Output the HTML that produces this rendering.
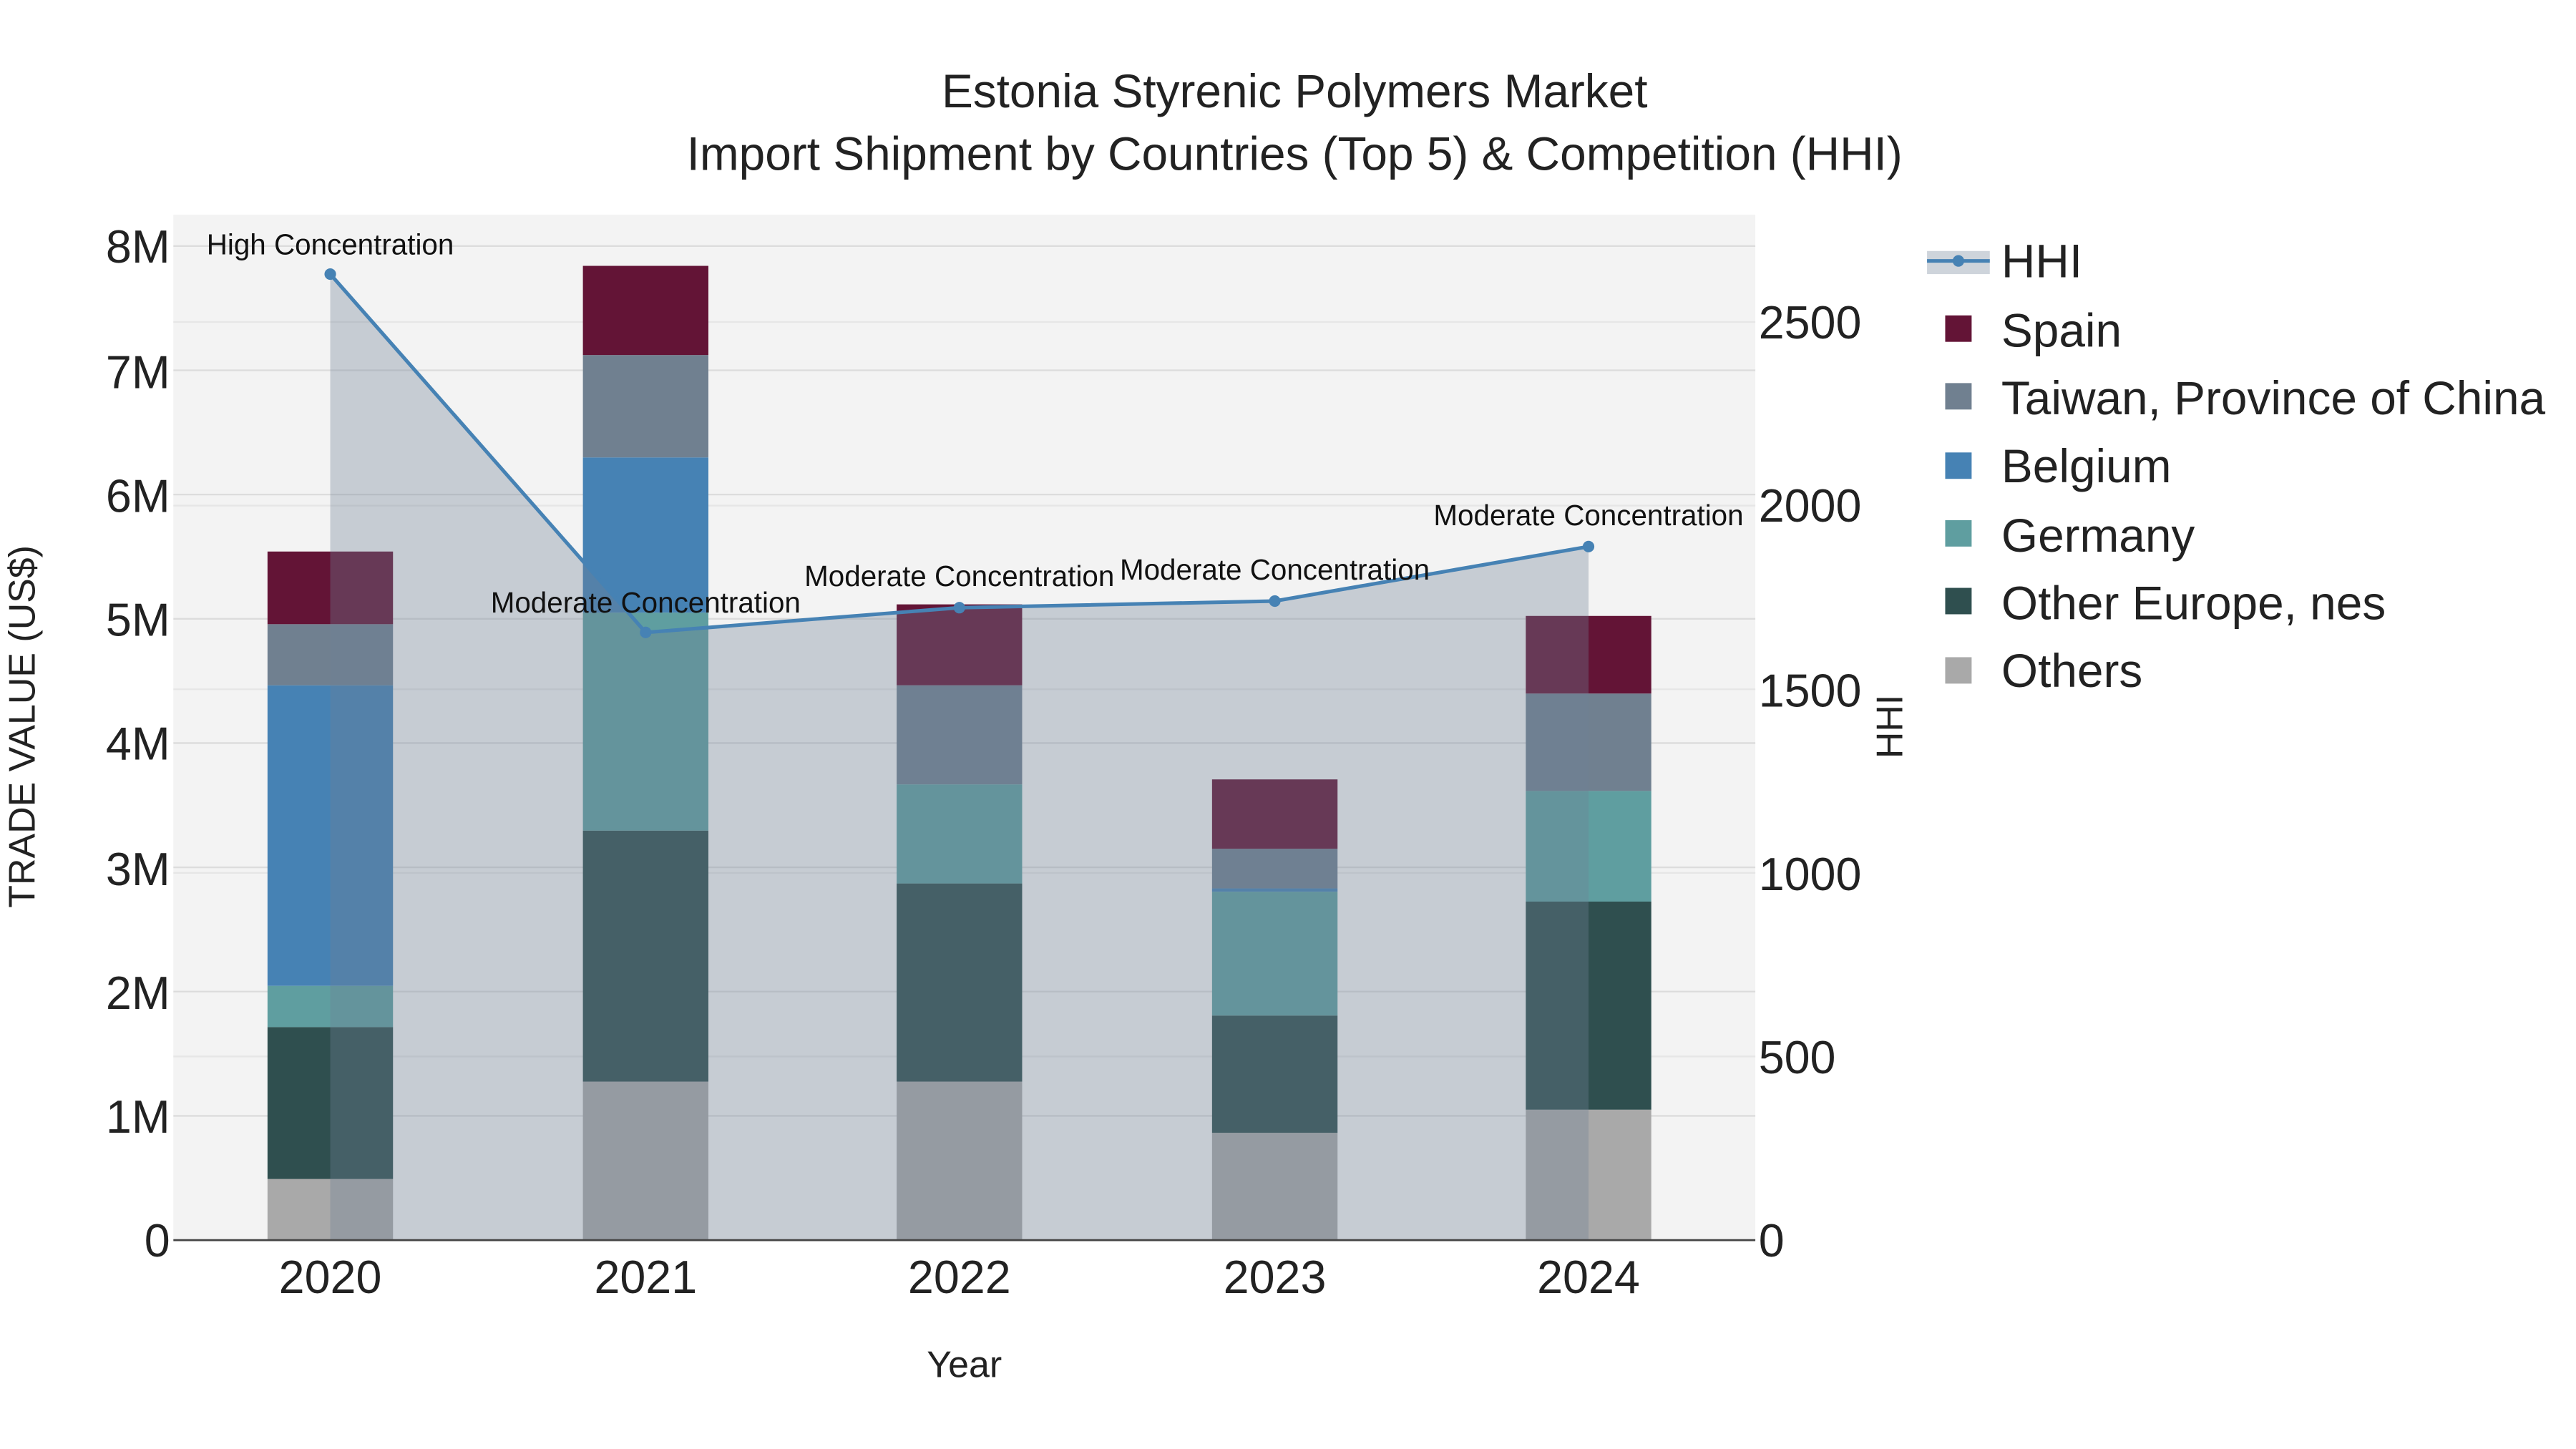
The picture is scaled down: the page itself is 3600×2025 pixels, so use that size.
<!DOCTYPE html>
<html><head><meta charset="utf-8"><style>html,body{margin:0;padding:0;background:#fff}svg{display:block}</style></head>
<body>
<svg width="3600" height="2025" viewBox="0 0 1560 877.5" xmlns="http://www.w3.org/2000/svg" font-family="Liberation Sans, sans-serif">
<rect width="1560" height="877.5" fill="#fff"/>
<rect x="105" y="130" width="958" height="621" fill="#f3f3f3"/>
<g stroke="#dcdcdc" stroke-width="1">
<line x1="105" x2="1063" y1="675.75" y2="675.75"/><line x1="105" x2="1063" y1="600.5" y2="600.5"/>
<line x1="105" x2="1063" y1="525.25" y2="525.25"/><line x1="105" x2="1063" y1="450" y2="450"/>
<line x1="105" x2="1063" y1="374.75" y2="374.75"/><line x1="105" x2="1063" y1="299.5" y2="299.5"/>
<line x1="105" x2="1063" y1="224.25" y2="224.25"/><line x1="105" x2="1063" y1="149" y2="149"/>
</g>
<g stroke="#e6e6e6" stroke-width="1">
<line x1="105" x2="1063" y1="639.8" y2="639.8"/><line x1="105" x2="1063" y1="528.6" y2="528.6"/>
<line x1="105" x2="1063" y1="417.4" y2="417.4"/><line x1="105" x2="1063" y1="306.2" y2="306.2"/>
<line x1="105" x2="1063" y1="195" y2="195"/>
</g>
<g>
<rect x="162" y="714" width="76" height="37" fill="#a9a9a9"/>
<rect x="162" y="622" width="76" height="92" fill="#2f4f4f"/>
<rect x="162" y="597" width="76" height="25" fill="#5f9ea0"/>
<rect x="162" y="415" width="76" height="182" fill="#4682b4"/>
<rect x="162" y="378" width="76" height="37" fill="#708090"/>
<rect x="162" y="334" width="76" height="44" fill="#631436"/>

<rect x="353" y="655" width="76" height="96" fill="#a9a9a9"/>
<rect x="353" y="503" width="76" height="152" fill="#2f4f4f"/>
<rect x="353" y="371" width="76" height="132" fill="#5f9ea0"/>
<rect x="353" y="277" width="76" height="94" fill="#4682b4"/>
<rect x="353" y="215" width="76" height="62" fill="#708090"/>
<rect x="353" y="161" width="76" height="54" fill="#631436"/>

<rect x="543" y="655" width="76" height="96" fill="#a9a9a9"/>
<rect x="543" y="535" width="76" height="120" fill="#2f4f4f"/>
<rect x="543" y="475" width="76" height="60" fill="#5f9ea0"/>
<rect x="543" y="415" width="76" height="60" fill="#708090"/>
<rect x="543" y="366" width="76" height="49" fill="#631436"/>

<rect x="734" y="686" width="76" height="65" fill="#a9a9a9"/>
<rect x="734" y="615" width="76" height="71" fill="#2f4f4f"/>
<rect x="734" y="540" width="76" height="75" fill="#5f9ea0"/>
<rect x="734" y="538" width="76" height="2" fill="#4682b4"/>
<rect x="734" y="514" width="76" height="24" fill="#708090"/>
<rect x="734" y="472" width="76" height="42" fill="#631436"/>

<rect x="924" y="672" width="76" height="79" fill="#a9a9a9"/>
<rect x="924" y="546" width="76" height="126" fill="#2f4f4f"/>
<rect x="924" y="479" width="76" height="67" fill="#5f9ea0"/>
<rect x="924" y="420" width="76" height="59" fill="#708090"/>
<rect x="924" y="373" width="76" height="47" fill="#631436"/>
</g>
<polygon points="200,166 391,383 581,368 772,364 962,331 962,751 200,751" fill="rgb(112,128,150)" fill-opacity="0.34"/>
<polyline points="200,166 391,383 581,368 772,364 962,331" fill="none" stroke="#4682b4" stroke-width="2.2"/>
<g fill="#4682b4"><circle cx="200" cy="166" r="3.5"/><circle cx="391" cy="383" r="3.5"/><circle cx="581" cy="368" r="3.5"/><circle cx="772" cy="364" r="3.5"/><circle cx="962" cy="331" r="3.5"/></g>
<line x1="105" x2="1063" y1="751" y2="751" stroke="#444" stroke-width="1.2"/>
<g font-size="17.5" fill="#111" text-anchor="middle">
<text x="200" y="154">High Concentration</text>
<text x="391" y="371">Moderate Concentration</text>
<text x="581" y="355">Moderate Concentration</text>
<text x="772" y="351">Moderate Concentration</text>
<text x="962" y="318">Moderate Concentration</text>
</g>
<g font-size="28.5" fill="#222" text-anchor="middle">
<text x="784" y="65">Estonia Styrenic Polymers Market</text>
<text x="784" y="103">Import Shipment by Countries (Top 5) &amp; Competition (HHI)</text>
</g>
<g font-size="28" fill="#222" text-anchor="end">
<text x="103" y="761">0</text><text x="103" y="686">1M</text><text x="103" y="611">2M</text>
<text x="103" y="536">3M</text><text x="103" y="460">4M</text><text x="103" y="385">5M</text>
<text x="103" y="310">6M</text><text x="103" y="235">7M</text><text x="103" y="159">8M</text>
</g>
<g font-size="28" fill="#222" text-anchor="start">
<text x="1065" y="761">0</text><text x="1065" y="650">500</text><text x="1065" y="539">1000</text>
<text x="1065" y="428">1500</text><text x="1065" y="316">2000</text><text x="1065" y="205">2500</text>
</g>
<g font-size="28" fill="#222" text-anchor="middle">
<text x="200" y="783">2020</text><text x="391" y="783">2021</text><text x="581" y="783">2022</text>
<text x="772" y="783">2023</text><text x="962" y="783">2024</text>
</g>
<text x="584" y="834" font-size="22.5" fill="#222" text-anchor="middle">Year</text>
<text transform="translate(21,440) rotate(-90)" font-size="22.5" fill="#222" text-anchor="middle">TRADE VALUE (US$)</text>
<text transform="translate(1152,440) rotate(-90)" font-size="22.5" fill="#222" text-anchor="middle">HHI</text>
<rect x="1167" y="152" width="38" height="14" fill="rgb(112,128,150)" fill-opacity="0.34"/>
<line x1="1167" x2="1205" y1="158" y2="158" stroke="#4682b4" stroke-width="2.2"/>
<circle cx="1186" cy="158" r="3.5" fill="#4682b4"/>
<g>
<rect x="1178" y="191" width="16" height="16" fill="#631436"/>
<rect x="1178" y="232" width="16" height="16" fill="#708090"/>
<rect x="1178" y="274" width="16" height="16" fill="#4682b4"/>
<rect x="1178" y="315" width="16" height="16" fill="#5f9ea0"/>
<rect x="1178" y="356" width="16" height="16" fill="#2f4f4f"/>
<rect x="1178" y="398" width="16" height="16" fill="#a9a9a9"/>
</g>
<g font-size="28.5" fill="#222">
<text x="1212" y="168">HHI</text>
<text x="1212" y="210">Spain</text>
<text x="1212" y="251">Taiwan, Province of China</text>
<text x="1212" y="292">Belgium</text>
<text x="1212" y="334">Germany</text>
<text x="1212" y="375">Other Europe, nes</text>
<text x="1212" y="416">Others</text>
</g>
</svg>
</body></html>
